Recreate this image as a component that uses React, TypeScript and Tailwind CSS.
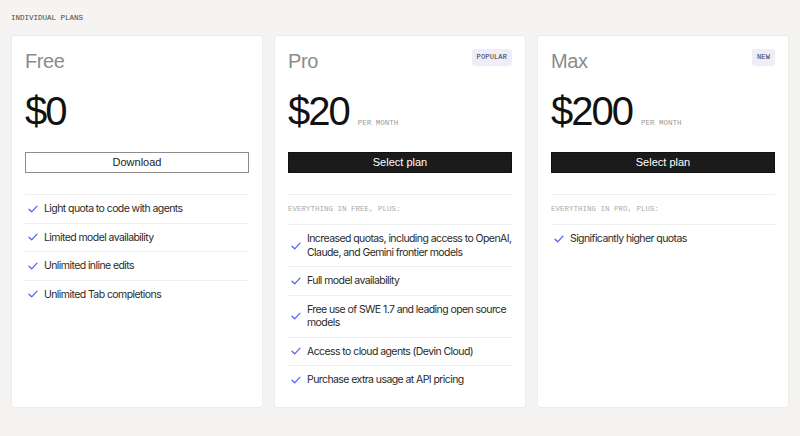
import React, { FC } from 'react'

interface IPlan {
  name: string
  price: string
  perMonth?: boolean
  badge?: string
  cta: string
  dark?: boolean
  heading?: string
  features: string[]
}

const plans: IPlan[] = [
  {
    name: 'Free',
    price: '$0',
    cta: 'Download',
    features: [
      'Light quota to code with agents',
      'Limited model availability',
      'Unlimited inline edits',
      'Unlimited Tab completions',
    ],
  },
  {
    name: 'Pro',
    price: '$20',
    perMonth: true,
    badge: 'POPULAR',
    cta: 'Select plan',
    dark: true,
    heading: 'EVERYTHING IN FREE, PLUS:',
    features: [
      'Increased quotas, including access to OpenAI, Claude, and Gemini frontier models',
      'Full model availability',
      'Free use of SWE 1.7 and leading open source models',
      'Access to cloud agents (Devin Cloud)',
      'Purchase extra usage at API pricing',
    ],
  },
  {
    name: 'Max',
    price: '$200',
    perMonth: true,
    badge: 'NEW',
    cta: 'Select plan',
    dark: true,
    heading: 'EVERYTHING IN PRO, PLUS:',
    features: ['Significantly higher quotas'],
  },
]

const mono = "font-['Liberation_Mono',monospace]"

const Check = () => (
  <svg width="10" height="8" viewBox="0 0 10 8" fill="none" className="shrink-0">
    <path d="M1 4.2 L3.7 6.8 L9 1.2" stroke="#4f5cf2" strokeWidth="1.2" strokeLinecap="round" strokeLinejoin="round" />
  </svg>
)

const PlanCard: FC<{ plan: IPlan }> = ({ plan }) => {
  return (
    <div className="bg-white rounded-[3px] border border-[#ecebe8] px-[13px] pt-[13px] flex flex-col min-h-0">
      <div className="flex flex-row items-start justify-between h-[24px]">
        <div className="text-[20px] leading-[24px] text-[#8b8b8b] tracking-[-0.02em] font-['Liberation_Sans',sans-serif]">
          {plan.name}
        </div>
        {plan.badge && (
          <div
            className={`${mono} bg-[#eeeefb] rounded-[3px] h-[17px] px-[5px] flex items-center text-[7px] text-[#333] tracking-[0.02em]`}
          >
            {plan.badge}
          </div>
        )}
      </div>
      <div className="flex flex-row items-baseline gap-[9px] mt-[18px] h-[40px]">
        <div className="text-[40px] leading-[40px] text-[#111] tracking-[-0.05em] font-['Liberation_Sans',sans-serif]">
          {plan.price}
        </div>
        {plan.perMonth && <div className={`${mono} text-[7.5px] text-[#9a9a9a]`}>PER MONTH</div>}
      </div>
      <button
        className={`mt-[21px] h-[21px] w-full flex items-center justify-center text-[11px] font-['Liberation_Sans',sans-serif] ${
          plan.dark ? 'bg-[#1b1b1b] border border-[#111] text-white' : 'bg-white border border-[#8d8d8d] text-[#222]'
        }`}
      >
        {plan.cta}
      </button>
      <div className="mt-[21px] flex flex-col">
        {plan.heading && (
          <div className={`${mono} border-t border-[#eeeeee] h-[30px] flex items-center text-[7.5px] text-[#ababab]`}>
            {plan.heading}
          </div>
        )}
        {plan.features.map((f) => (
          <div key={f} className="border-t border-[#eeeeee] py-[7px] flex flex-row items-center gap-[6px] pl-[3px]">
            <Check />
            <div className="text-[10.5px] leading-[13.5px] text-[#2a2a2a] font-['Inter',sans-serif] tracking-[-0.055em]">
              {f}
            </div>
          </div>
        ))}
      </div>
    </div>
  )
}

const App: FC = () => {
  return (
    <div className="w-[800px] h-[436px] bg-[#f5f4f2] pt-[13px] px-[11px]">
      <div className={`${mono} text-[7.5px] text-[#444] mb-[12px] leading-[10px]`}>INDIVIDUAL PLANS</div>
      <div className="grid grid-cols-3 grid-rows-[373px] gap-[11px] h-[373px]">
        {plans.map((p) => (
          <PlanCard key={p.name} plan={p} />
        ))}
      </div>
    </div>
  )
}

export default App
